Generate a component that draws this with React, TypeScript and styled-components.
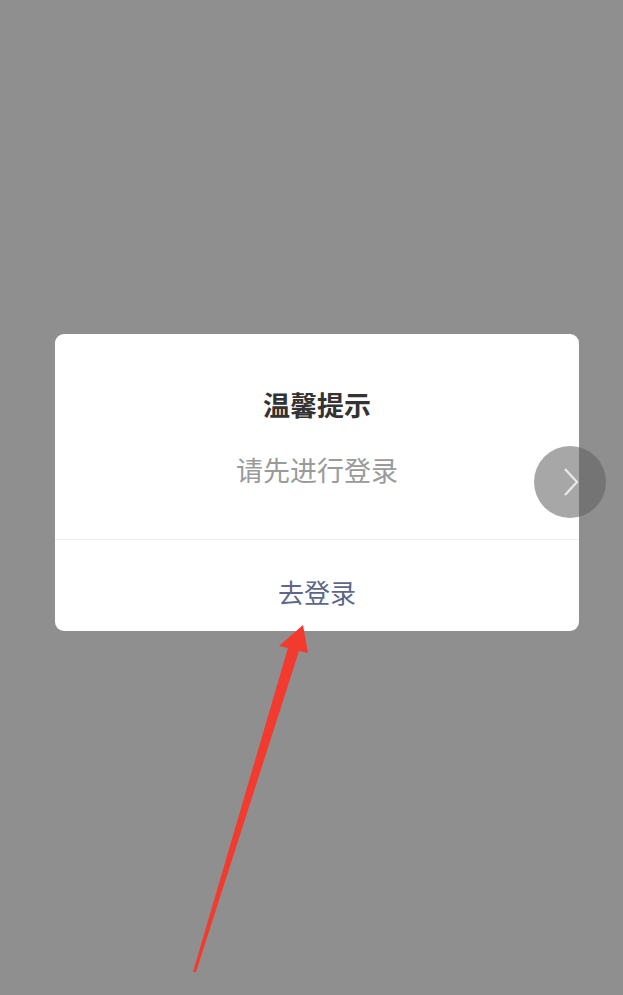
import React from 'react';
import styled, { createGlobalStyle } from 'styled-components';

const GlobalStyle = createGlobalStyle`
  html, body {
    margin: 0;
    padding: 0;
    background: #8f8f8f;
  }
  body {
    font-family: "Noto Sans CJK SC", "Noto Sans", sans-serif;
  }
`;

const Screen = styled.div`
  position: relative;
  width: 623px;
  height: 995px;
  overflow: hidden;
  background: #8f8f8f;
  padding: 334px 44px 0 55px;
  box-sizing: border-box;
`;

const Dialog = styled.div`
  width: 524px;
  background: #ffffff;
  border-radius: 9px;
  display: flex;
  flex-direction: column;
  overflow: hidden;
`;

const Body = styled.div`
  display: flex;
  flex-direction: column;
  align-items: center;
  padding: 53px 24px 0;
  height: 206px;
  box-sizing: border-box;
  border-bottom: 1px solid #efefef;
`;

const Title = styled.h2`
  margin: 0;
  font-size: 27px;
  line-height: 36px;
  font-weight: 700;
  color: #333333;
`;

const Message = styled.p`
  margin: 29px 0 0;
  font-size: 27px;
  line-height: 36px;
  color: #9a9a9a;
`;

const Action = styled.button`
  height: 91px;
  border: none;
  background: transparent;
  font-family: inherit;
  font-size: 26px;
  color: #5d6789;
  cursor: pointer;
  padding: 11px 0 0;
`;

const NextButton = styled.button`
  position: absolute;
  left: 534px;
  top: 446px;
  width: 72px;
  height: 72px;
  border-radius: 50%;
  border: none;
  padding: 0;
  background: rgba(95, 95, 95, 0.55);
  display: flex;
  align-items: center;
  justify-content: center;
  cursor: pointer;
`;

const Pointer = styled.svg`
  position: absolute;
  left: 0;
  top: 0;
  pointer-events: none;
`;

export default function App() {
  return (
    <>
      <GlobalStyle />
      <Screen>
        <Dialog>
          <Body>
            <Title>温馨提示</Title>
            <Message>请先进行登录</Message>
          </Body>
          <Action>去登录</Action>
        </Dialog>

        <NextButton aria-label="next">
          <svg width="24" height="36" viewBox="0 0 24 36">
            <path d="M7 5 L19 18 L7 31" fill="none" stroke="rgba(255,255,255,0.75)" strokeWidth="2.2" />
          </svg>
        </NextButton>

        <Pointer width="623" height="995" viewBox="0 0 623 995">
          <path
            d="M193 972 L288 648 L279 646 L303 625 L308 653 L299 651 L196 972 Z"
            fill="#f23a2e"
          />
        </Pointer>
      </Screen>
    </>
  );
}
